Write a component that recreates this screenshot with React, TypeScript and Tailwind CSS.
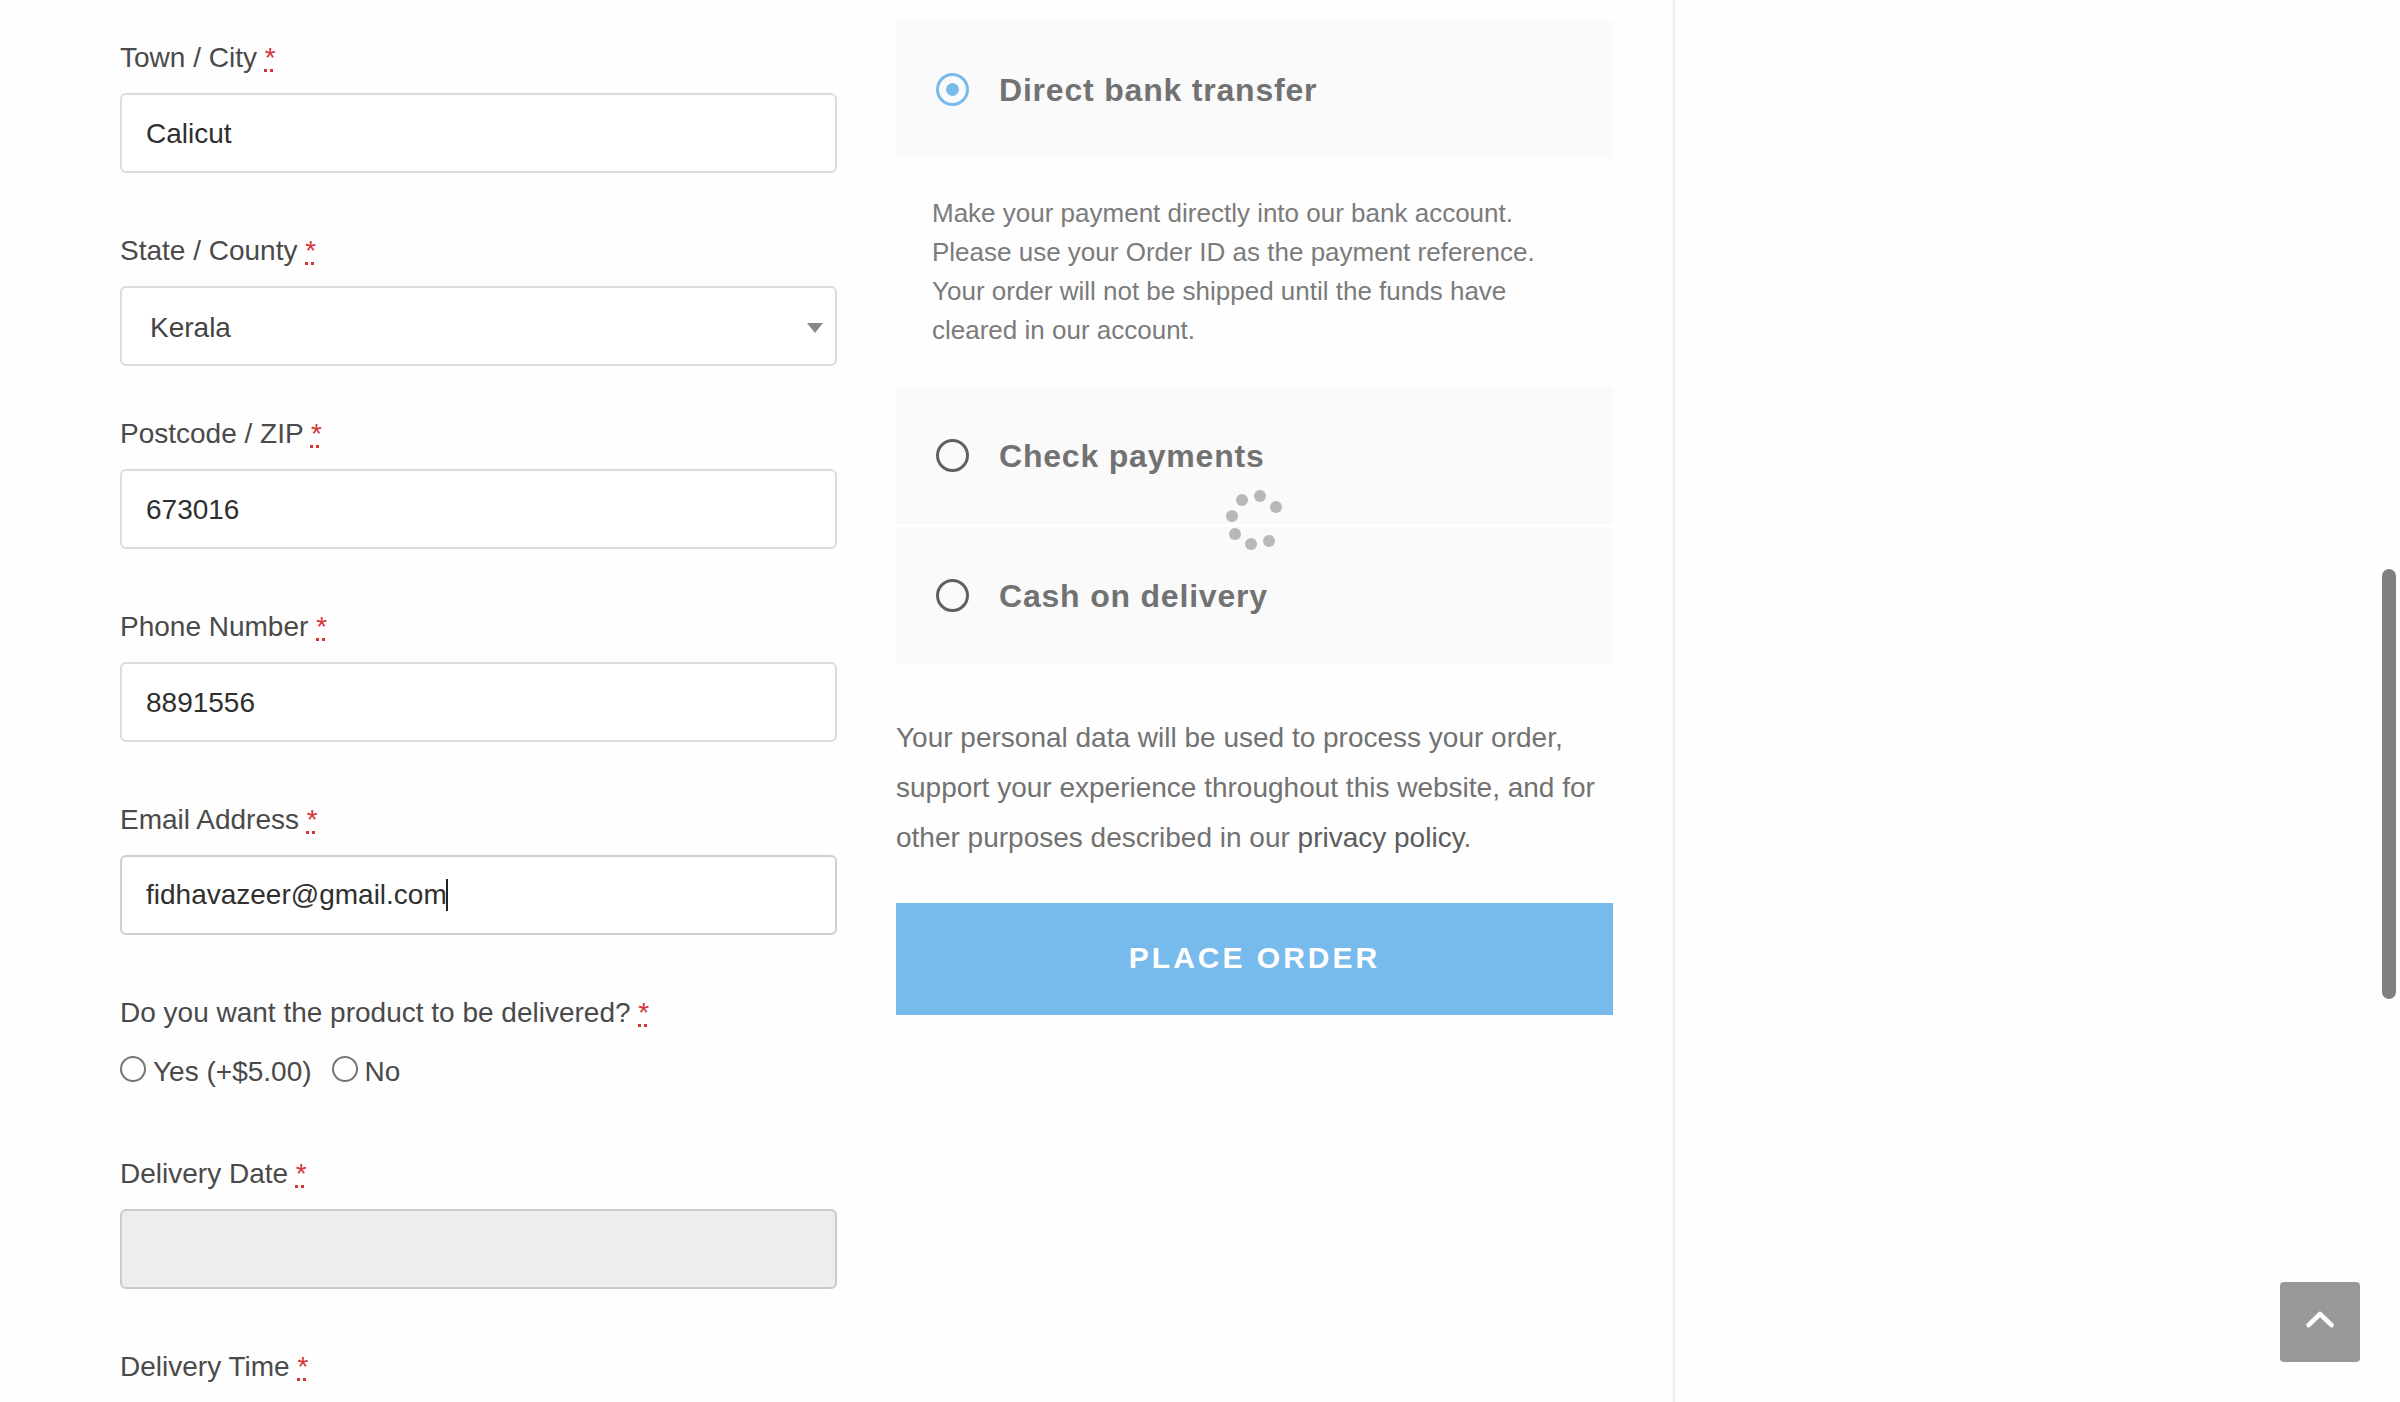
import type { ReactNode } from "react";

const labelCls = "block text-[28px] leading-[50px] text-[#4a4a4a]";
const boxCls = "block h-20 w-full rounded-md border-2 text-[28px] outline-none";
const inputCls = "border-[#dcdcdc] bg-white px-6 pt-0.5 text-[#2f2f2f]";

function Req() {
  return (
    <abbr title="required" className="text-[#d63638] underline decoration-dotted decoration-[3px]">
      *
    </abbr>
  );
}

function Field({ id, label, children }: { id: string; label: string; children?: ReactNode }) {
  return (
    <div className="flex flex-col gap-2.5">
      <label htmlFor={id} className={labelCls}>
        {label} <Req />
      </label>
      {children}
    </div>
  );
}

function DeliveryOption({ id, label }: { id: string; label: string }) {
  return (
    <div className="flex items-center gap-[7px]">
      <input
        type="radio"
        name="delivery"
        id={id}
        className="mb-1.5 size-[26px] appearance-none rounded-full border-2 border-[#757575] bg-white checked:bg-[#757575]"
      />
      <label htmlFor={id} className="text-[28px] text-[#4a4a4a]">
        {label}
      </label>
    </div>
  );
}

function Method({ id, label, checked }: { id: string; label: string; checked?: boolean }) {
  return (
    <div className="flex h-[137px] items-center gap-[30px] bg-[#fafafa] px-10">
      <input
        type="radio"
        name="payment"
        id={id}
        defaultChecked={checked}
        className="grid size-[33px] appearance-none place-items-center rounded-full border-3 border-[#606060] before:size-[13px] before:rounded-full checked:border-[#77bbed] checked:before:bg-[#77bbed]"
      />
      <label htmlFor={id} className="text-[32px] font-bold tracking-wide text-[#727272]">
        {label}
      </label>
    </div>
  );
}

const spinnerDots = [
  [35, 6],
  [51, 17],
  [44, 51],
  [26, 54],
  [10, 44],
  [7, 26],
  [17, 10],
];

export default function App() {
  return (
    <div className="relative flex h-screen overflow-hidden bg-[#fefefe] font-['Liberation_Sans',Arial,sans-serif]">
      <main className="grid flex-1 grid-cols-2 items-start gap-[59px] border-r-2 border-[#eeeeee] pr-[60px] pl-[120px]">
        <form className="flex flex-col gap-[53px] pt-[33px]">
          <Field id="city" label="Town / City">
            <input id="city" type="text" className={`${boxCls} ${inputCls}`} defaultValue="Calicut" />
          </Field>
          <div className="-mb-2.5">
            <Field id="state" label="State / County">
              <div className="relative">
                <select
                  id="state"
                  className={`${boxCls} appearance-none border-[#dcdcdc] bg-white pt-1 pr-12 pl-7 text-[#444444]`}
                >
                  <option>Kerala</option>
                </select>
                <div className="pointer-events-none absolute inset-y-0 right-3.5 flex items-center pt-1">
                  <svg width="16" height="10" viewBox="0 0 16 10" fill="#888888">
                    <path d="M0 0h16L8 10z" />
                  </svg>
                </div>
              </div>
            </Field>
          </div>
          <Field id="zip" label="Postcode / ZIP">
            <input id="zip" type="text" className={`${boxCls} ${inputCls}`} defaultValue="673016" />
          </Field>
          <Field id="phone" label="Phone Number">
            <input id="phone" type="tel" className={`${boxCls} ${inputCls}`} defaultValue="8891556" />
          </Field>
          <Field id="email" label="Email Address">
            <div className="relative">
              <input
                id="email"
                type="email"
                className={`${boxCls} border-[#cfcfcf] bg-white px-6 text-[#2f2f2f]`}
                defaultValue="fidhavazeer@gmail.com"
              />
              <span className="absolute top-6 left-[326px] h-8 w-0.5 bg-[#222222]" />
            </div>
          </Field>
          <fieldset className="flex flex-col">
            <legend className={`${labelCls} mb-2.5`}>
              Do you want the product to be delivered? <Req />
            </legend>
            <div className="flex h-12 items-center gap-5">
              <DeliveryOption id="delivery-yes" label="Yes (+$5.00)" />
              <DeliveryOption id="delivery-no" label="No" />
            </div>
          </fieldset>
          <Field id="date" label="Delivery Date">
            <input id="date" type="text" readOnly className={`${boxCls} border-[#cacaca] bg-[#ededed] px-6`} />
          </Field>
          <Field id="time" label="Delivery Time">
            <input id="time" type="text" readOnly className={`${boxCls} border-[#cacaca] bg-[#ededed] px-6`} />
          </Field>
        </form>

        <section className="relative mt-[21px] pb-1">
          <Method id="bank" label="Direct bank transfer" checked />
          <p className="px-9 pt-9 pb-[37px] text-[26px] leading-[39px] text-[#7b7b7b]">
            Make your payment directly into our bank account. Please use your Order ID as the payment reference. Your
            order will not be shipped until the funds have cleared in our account.
          </p>
          <div className="flex flex-col gap-[3px] bg-white">
            <Method id="check" label="Check payments" />
            <Method id="cash" label="Cash on delivery" />
          </div>
          <p className="pt-[49px] pb-10 text-[28px] leading-[50px] text-[#727272]">
            Your personal data will be used to process your order, support your experience throughout this website, and
            for other purposes described in our{" "}
            <a href="#privacy" className="text-[#5c5c5c]">
              privacy policy
            </a>
            .
          </p>
          <button
            type="button"
            className="h-28 w-full bg-[#77bbed] pb-[3px] text-[30px] font-bold tracking-widest text-white"
          >
            PLACE ORDER
          </button>
          <div className="pointer-events-none absolute inset-0 flex items-center justify-center">
            <svg width="60" height="60" viewBox="0 0 60 60" fill="#b8b8b8">
              {spinnerDots.map(([x, y]) => (
                <circle key={x} cx={x} cy={y} r="6" />
              ))}
            </svg>
          </div>
        </section>
      </main>
      <aside className="w-[725px]" />

      <button
        type="button"
        aria-label="Back to top"
        className="fixed right-10 bottom-10 flex size-20 items-center justify-center rounded bg-[#999999]"
      >
        <svg width="40" height="40" viewBox="0 0 40 40" fill="none" stroke="#ffffff" strokeWidth="4.6">
          <path d="M8.6 23.2 20 12l11.6 11.2" strokeLinecap="round" strokeLinejoin="round" />
        </svg>
      </button>
      <div className="fixed top-[569px] right-1 h-[430px] w-3.5 rounded-full bg-[#808080]" />
    </div>
  );
}
